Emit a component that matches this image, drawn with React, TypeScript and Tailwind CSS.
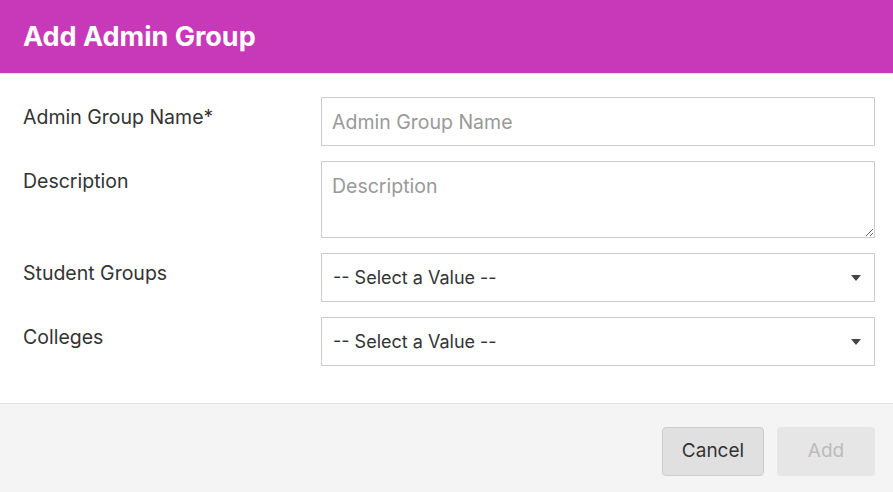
import React from 'react';

const font = { fontFamily: 'Inter, "Noto Sans", sans-serif' };

function Caret() {
  return (
    <svg width="10" height="6" viewBox="0 0 10 6" className="shrink-0">
      <path d="M0 0 L10 0 L5 6 Z" fill="#444" />
    </svg>
  );
}

function Row({ label, children }: { label: string; children: React.ReactNode }) {
  return (
    <div className="flex items-start">
      <label className="w-[298px] shrink-0 pt-[7px] text-[19.5px] leading-[26px] text-[#333]">{label}</label>
      <div className="flex-1">{children}</div>
    </div>
  );
}

function SelectBox() {
  return (
    <div className="flex h-[49px] items-center justify-between border border-[#ccc] bg-white pl-[11px] pr-[13px] text-[18px] text-[#333]">
      <span>-- Select a Value --</span>
      <Caret />
    </div>
  );
}

export default function App() {
  return (
    <div className="flex h-[492px] w-[893px] flex-col bg-white" style={font}>
      <div className="flex h-[74px] items-center border-b border-[#e5e5e5] bg-[#c839b9] px-[23px] pt-[2px]">
        <h1 className="text-[27px] font-bold text-white">Add Admin Group</h1>
      </div>

      <div className="flex flex-1 flex-col gap-[15px] pl-[23px] pr-[18px] pt-[23px]">
        <Row label="Admin Group Name*">
          <input
            placeholder="Admin Group Name"
            className="h-[49px] w-full border border-[#ccc] px-[10px] text-[19.5px] text-[#333] outline-none placeholder:text-[#999]"
          />
        </Row>
        <Row label="Description">
          <textarea
            placeholder="Description"
            className="block h-[77px] w-full border border-[#ccc] px-[10px] pt-[11px] text-[19.5px] leading-[26px] text-[#333] outline-none placeholder:text-[#999]"
          />
        </Row>
        <Row label="Student Groups">
          <SelectBox />
        </Row>
        <Row label="Colleges">
          <SelectBox />
        </Row>
      </div>

      <div className="flex h-[89px] items-center justify-end gap-[13px] border-t border-[#e3e3e3] bg-[#f4f4f4] pr-[18px] pt-[7px]">
        <button className="h-[49px] w-[102px] rounded-[4px] border border-[#ccc] bg-[#e0e0e0] text-[19px] text-[#333]">
          Cancel
        </button>
        <button className="h-[49px] w-[98px] rounded-[4px] bg-[#e6e6e6] text-[19px] text-[#bbb]">
          Add
        </button>
      </div>
    </div>
  );
}
